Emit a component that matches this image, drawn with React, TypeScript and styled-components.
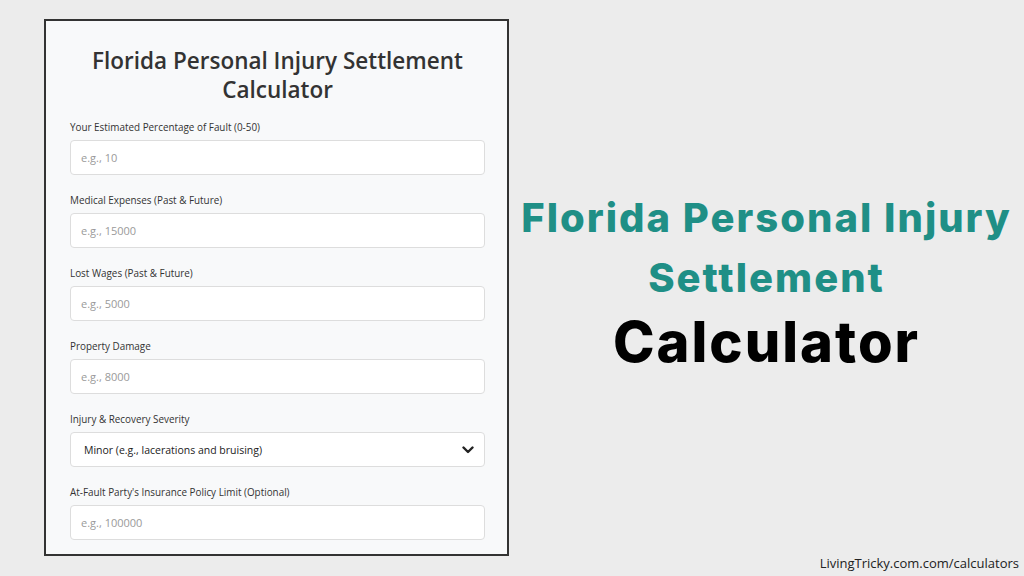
import { ReactElement } from 'react';
import styled, { createGlobalStyle } from 'styled-components';

const GlobalStyle = createGlobalStyle`
  html, body {
    margin: 0;
    padding: 0;
    background: #ececec;
  }
  * {
    box-sizing: border-box;
  }
`;

interface FieldDef {
  label: string;
  placeholder?: string;
  select?: string;
}

const FIELDS: FieldDef[] = [
  { label: 'Your Estimated Percentage of Fault (0-50)', placeholder: 'e.g., 10' },
  { label: 'Medical Expenses (Past & Future)', placeholder: 'e.g., 15000' },
  { label: 'Lost Wages (Past & Future)', placeholder: 'e.g., 5000' },
  { label: 'Property Damage', placeholder: 'e.g., 8000' },
  { label: 'Injury & Recovery Severity', select: 'Minor (e.g., lacerations and bruising)' },
  { label: "At-Fault Party's Insurance Policy Limit (Optional)", placeholder: 'e.g., 100000' },
];

function Chevron(): ReactElement {
  return (
    <svg width="12" height="8" viewBox="0 0 12 8" fill="none">
      <path d="M1.5 1.5 L6 6 L10.5 1.5" stroke="#222" strokeWidth="2.4" strokeLinecap="round" strokeLinejoin="round" />
    </svg>
  );
}

function App(): ReactElement {
  return (
    <Page>
      <GlobalStyle />
      <Card>
        <CardTitle>Florida Personal Injury Settlement Calculator</CardTitle>
        {FIELDS.map((f) => (
          <Field key={f.label}>
            <Label>{f.label}</Label>
            {f.select ? (
              <SelectBox>
                <span>{f.select}</span>
                <Chevron />
              </SelectBox>
            ) : (
              <Input placeholder={f.placeholder} />
            )}
          </Field>
        ))}
      </Card>
      <Side>
        <Headline>
          <Teal>Florida Personal Injury</Teal>
          <Teal>Settlement</Teal>
          <Dark>Calculator</Dark>
        </Headline>
        <Footer>LivingTricky.com.com/calculators</Footer>
      </Side>
    </Page>
  );
}

const Page = styled.div`
  width: 1024px;
  height: 576px;
  display: flex;
  overflow: hidden;
  background: #ececec;
`;

const Card = styled.div`
  margin: 19px 0 0 44px;
  width: 465px;
  height: 537px;
  flex-shrink: 0;
  border: 2px solid #333;
  background: #f8f9fa;
  padding: 25px 22px 0 24px;
  font-family: 'Open Sans', 'Noto Sans', sans-serif;
`;

const CardTitle = styled.h1`
  margin: 0 0 16px;
  text-align: center;
  font-size: 22.5px;
  line-height: 29px;
  font-weight: 600;
  color: #333;
`;

const Field = styled.div`
  display: flex;
  flex-direction: column;
  margin-bottom: 18px;
`;

const Label = styled.label`
  font-size: 9.9px;
  line-height: 14px;
  color: #333;
  margin-bottom: 6px;
`;

const Input = styled.input`
  width: 100%;
  height: 35px;
  border: 1px solid #ddd;
  border-radius: 4px;
  background: #fff;
  padding: 0 10px;
  font-family: 'Open Sans', 'Noto Sans', sans-serif;
  font-size: 11px;
  outline: none;
  &::placeholder {
    color: #9a9a9a;
  }
`;

const SelectBox = styled.div`
  height: 35px;
  border: 1px solid #ddd;
  border-radius: 4px;
  background: #fff;
  padding: 0 10px 0 13px;
  display: flex;
  align-items: center;
  justify-content: space-between;
  font-size: 10.5px;
  color: #222;
`;

const Side = styled.div`
  flex: 1;
  display: flex;
  flex-direction: column;
  align-items: center;
  padding-top: 188px;
`;

const Headline = styled.div`
  display: flex;
  flex-direction: column;
  align-items: center;
  font-family: 'Inter', 'Lato', sans-serif;
  font-weight: 800;
`;

const Teal = styled.div`
  color: #1f8f86;
  font-size: 40px;
  line-height: 60px;
  letter-spacing: 2px;
`;

const Dark = styled.div`
  color: #000;
  font-size: 56px;
  line-height: 68px;
  letter-spacing: 2px;
`;

const Footer = styled.div`
  margin-top: auto;
  align-self: flex-end;
  margin-right: 5px;
  margin-bottom: 4px;
  font-family: 'Open Sans', 'Noto Sans', sans-serif;
  font-size: 13px;
  color: #222;
`;

export default App;
